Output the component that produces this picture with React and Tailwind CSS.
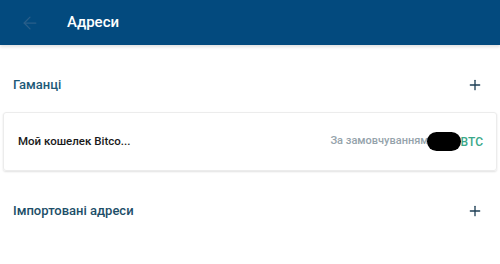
import { ArrowLeft, Plus } from 'lucide-react';

export default function App() {
  return (
    <div className="w-[500px] h-[264px] bg-white overflow-hidden" style={{ fontFamily: 'Roboto, "Noto Sans", sans-serif' }}>
      <div className="h-[45px] bg-[#034a7e] flex items-center shadow-[0_2px_3px_rgba(0,0,0,0.12)] relative">
        <ArrowLeft className="ml-[20px] w-[20px] h-[20px] text-[#2a5f8a]" strokeWidth={1.5} />
        <span className="ml-[27px] text-white text-[15px] font-medium">Адреси</span>
      </div>

      <div className="h-[79px] flex items-center justify-between pl-[13px] pr-[17px] mb-[-12px]">
        <span className="text-[13px] font-medium text-[#1d5a78]">Гаманці</span>
        <Plus className="w-[16px] h-[16px] text-[#1e3f55]" strokeWidth={2} />
      </div>

      <div className="mx-[3px] h-[59px] border border-[#ececec] rounded-[3px] shadow-[0_1px_2px_rgba(0,0,0,0.12)] flex items-center justify-between pl-[14px] pr-[13px]">
        <span className="text-[11.5px] font-medium text-[#1a1a1a]">Мой кошелек Bitco...</span>
        <div className="flex items-center">
          <span className="text-[11px] font-medium text-[#95a3ab]">За замовчуванням</span>
          <span className="w-[34px] h-[19px] bg-black rounded-full ml-[-2px]"></span>
          <span className="text-[12px] font-medium text-[#3aa889]">BTC</span>
        </div>
      </div>

      <div className="h-[80px] flex items-center justify-between pl-[13px] pr-[17px]">
        <span className="text-[13px] font-medium text-[#1d4e68]">Імпортовані адреси</span>
        <Plus className="w-[16px] h-[16px] text-[#1e3f55]" strokeWidth={2} />
      </div>
    </div>
  );
}
